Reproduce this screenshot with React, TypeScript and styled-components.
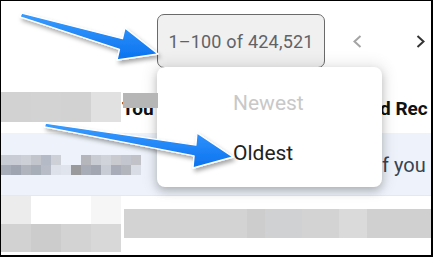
import React from 'react';
import styled, { createGlobalStyle } from 'styled-components';

const GlobalStyle = createGlobalStyle`
  * { box-sizing: border-box; }
  body {
    margin: 0;
    background: #fff;
    font-family: Roboto, "Liberation Sans", Arial, sans-serif;
  }
`;

type Cells = string[][];

const ROW1_CELLS: Cells = [['#d2d2d2', '#d3d3d3', '#d2d2d2', '#e1e1e1']];
const ROW2_CELLS: Cells = [
  ['#c8ccd4', '#c9ccd4', '#cdd0d6', '#c2c5cc', '#b4bac6', '#cdd0d6', '#eef2fa', '#eef2fa', '#b4b6bc', '#c9ccd2', '#d0d3da', '#c8cad0', '#c3c6ce', '#c0c2c8', '#eef2fa'],
  ['#a6acb8', '#9ea4b0', '#b0b4bc', '#a8aeb8', '#b8bcc6', '#dde1ea', '#e0e4ec', '#9a9a9c', '#a8acb6', '#a2a6b0', '#c8ccd4', '#a8acb8', '#b2b6bc', '#d8dce4', '#eef2fa'],
];
const ROW3_CELLS: Cells = [
  ['#ececec', '#ffffff', '#ffffff', '#f5f6f5'],
  ['#d2d2d2', '#cccccc', '#d3d3d3', '#d8d8d8'],
];

function Mosaic({ cells, cellW, cellH }: { cells: Cells; cellW: number; cellH: number }) {
  return (
    <S_Mosaic cols={cells[0].length} cellW={cellW} cellH={cellH}>
      {cells.flat().map((c, i) => (
        <S_Cell key={i} color={c} />
      ))}
    </S_Mosaic>
  );
}

function Arrows() {
  return (
    <S_ArrowLayer width="433" height="257" viewBox="0 0 433 257">
      <defs>
        <linearGradient id="ab" x1="0" y1="0" x2="0" y2="1">
          <stop offset="0" stopColor="#3a9cff" />
          <stop offset="1" stopColor="#0a72ef" />
        </linearGradient>
        <filter id="sh" x="-10%" y="-30%" width="130%" height="180%">
          <feDropShadow dx="2" dy="3" stdDeviation="2" floodColor="#000" floodOpacity="0.35" />
        </filter>
      </defs>
      <polygon
        points="20,16.8 21.8,13.2 122.5,38.7 125,28 158,54 117,60 119.5,49.3"
        fill="url(#ab)"
        stroke="#fff"
        strokeWidth="1.3"
        strokeLinejoin="round"
        filter="url(#sh)"
      />
      <polygon
        points="44.5,126.8 45.5,123.2 195.9,145.1 197,133 233,157 193,168 194.1,155.9"
        fill="url(#ab)"
        stroke="#fff"
        strokeWidth="1.3"
        strokeLinejoin="round"
        filter="url(#sh)"
      />
    </S_ArrowLayer>
  );
}

export default function App() {
  return (
    <>
      <GlobalStyle />
      <S_Frame>
        <S_TopBar>
          <S_CountButton>1–100 of 424,521</S_CountButton>
          <S_Chevron dim width="9" height="13" viewBox="0 0 9 13">
            <polyline points="7.5,1 1.5,6.5 7.5,12" />
          </S_Chevron>
          <S_Chevron width="9" height="13" viewBox="0 0 9 13">
            <polyline points="1.5,1 7.5,6.5 1.5,12" />
          </S_Chevron>
        </S_TopBar>

        <S_Row1>
          <Mosaic cells={ROW1_CELLS} cellW={30} cellH={30} />
          <S_Censored>
            Tou
            <S_CensorBlock />
          </S_Censored>
          <S_RightBold>d Rec</S_RightBold>
        </S_Row1>

        <S_Row2>
          <Mosaic cells={ROW2_CELLS} cellW={10} cellH={10} />
          <S_RightPlain>f you</S_RightPlain>
        </S_Row2>

        <S_Row3>
          <Mosaic cells={ROW3_CELLS} cellW={30} cellH={28} />
          <S_GrayBar />
        </S_Row3>

        <S_Menu>
          <S_MenuItem disabled>Newest</S_MenuItem>
          <S_MenuItem>Oldest</S_MenuItem>
        </S_Menu>

        <Arrows />
      </S_Frame>
    </>
  );
}

const S_Frame = styled.div`
  position: relative;
  width: 433px;
  height: 257px;
  border: 1px solid #000;
  border-right-width: 2px;
  border-bottom-width: 2px;
  overflow: hidden;
  background: #fff;
`;

const S_TopBar = styled.div`
  display: flex;
  align-items: center;
  height: 91px;
  padding: 13px 0 24px 156px;
`;

const S_CountButton = styled.div`
  width: 168px;
  height: 54px;
  display: flex;
  align-items: center;
  justify-content: center;
  background: #f0f0f0;
  border: 1.5px solid #6a6a6a;
  border-radius: 7px;
  color: #5f6368;
  font-size: 18px;
  letter-spacing: 0.2px;
`;

const S_Chevron = styled.svg<{ dim?: boolean }>`
  margin-left: ${({ dim }) => (dim ? '28px' : '54px')};
  fill: none;
  stroke: ${({ dim }) => (dim ? '#a4a4a4' : '#333')};
  stroke-width: 2;
`;

const S_Mosaic = styled.div<{ cols: number; cellW: number; cellH: number }>`
  display: grid;
  flex-shrink: 0;
  grid-template-columns: repeat(${({ cols }) => cols}, ${({ cellW }) => cellW}px);
  grid-auto-rows: ${({ cellH }) => cellH}px;
`;

const S_Cell = styled.div<{ color: string }>`
  background: ${({ color }) => color};
`;

const S_Row1 = styled.div`
  display: flex;
  align-items: center;
  height: 30px;
  margin-bottom: 11px;
`;

const S_Censored = styled.div`
  position: relative;
  width: 37px;
  height: 30px;
  line-height: 30px;
  padding: 2px 0 0 1px;
  font-size: 19px;
  font-weight: 700;
  color: #111;
  white-space: nowrap;
  overflow: hidden;
`;

const S_CensorBlock = styled.span`
  position: absolute;
  z-index: 1;
  left: 2px;
  top: 1px;
  width: 40px;
  height: 15px;
  background: #b6b6b6;
`;

const S_RightBold = styled.div`
  margin-left: auto;
  width: 51px;
  padding-top: 2px;
  font-size: 19px;
  font-weight: 700;
  color: #111;
  white-space: nowrap;
  overflow: hidden;
`;

const S_Row2 = styled.div`
  display: flex;
  align-items: center;
  height: 62px;
  padding-top: 2px;
  background: #eef3fb;
`;

const S_RightPlain = styled.div`
  margin-left: auto;
  width: 49px;
  font-size: 20px;
  color: #3c4250;
  white-space: nowrap;
  overflow: hidden;
`;

const S_Row3 = styled.div`
  display: flex;
  align-items: flex-start;
  border-top: 1px solid #e6e8ec;
`;

const S_GrayBar = styled.div`
  flex: 1;
  height: 29px;
  margin: 13px 0 0 3px;
  background: linear-gradient(
    90deg,
    #d3d3d3 0 40%,
    #cdcdcd 40% 46%,
    #d0d1d2 46% 58%,
    #d3d3d3 58% 70%,
    #dadada 70% 79%,
    #d0d0d0 79% 100%
  );
`;

const S_Menu = styled.div`
  position: absolute;
  left: 156px;
  top: 66px;
  width: 225px;
  height: 120px;
  padding: 11px 0 9px;
  background: #fff;
  border-radius: 8px;
  box-shadow: 0 0 14px 5px rgba(0, 0, 0, 0.07), 0 4px 8px rgba(0, 0, 0, 0.22);
`;

const S_MenuItem = styled.div<{ disabled?: boolean }>`
  height: 50px;
  display: flex;
  align-items: center;
  padding-left: 76px;
  font-size: 21px;
  color: ${({ disabled }) => (disabled ? '#c8c8c8' : '#222')};
`;

const S_ArrowLayer = styled.svg`
  position: absolute;
  left: -1px;
  top: -1px;
  pointer-events: none;
  overflow: visible;
`;
